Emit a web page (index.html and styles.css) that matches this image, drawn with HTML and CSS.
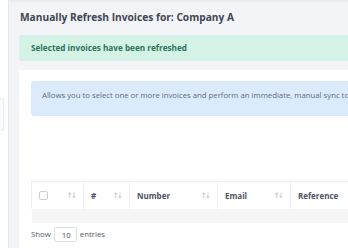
FILE: index.html
```html
<!DOCTYPE html>
<html lang="en">
<head>
    <meta charset="UTF-8">
    <title>Manually Refresh Invoices</title>
    <link rel="stylesheet" href="styles.css">
</head>
<body>
    <div class="layout">
        <!-- Left sidebar edge -->
        <aside class="sidebar">
            <div class="sidebarItem"></div>
        </aside>

        <main class="content">
            <h1 class="pageTitle">Manually Refresh Invoices for: Company A</h1>

            <div class="alertSuccess">Selected invoices have been refreshed</div>

            <div class="card">
                <div class="infoBox">Allows you to select one or more invoices and perform an immediate, manual sync to update them from the accounting system.</div>

                <div class="tableSpacer"></div>

                <table class="invoiceTable">
                    <thead>
                        <tr>
                            <th class="colCheck"><span class="thInner"><span class="checkbox"></span><span class="sortIcon">↑↓</span></span></th>
                            <th class="colHash"><span class="thInner"><span>#</span><span class="sortIcon">↑↓</span></span></th>
                            <th class="colNumber"><span class="thInner"><span>Number</span><span class="sortIcon">↑↓</span></span></th>
                            <th class="colEmail"><span class="thInner"><span>Email</span><span class="sortIcon">↑↓</span></span></th>
                            <th class="colRef"><span class="thInner"><span>Reference</span><span class="sortIcon">↑↓</span></span></th>
                        </tr>
                    </thead>
                    <tbody>
                        <tr class="emptyRow"><td colspan="5"></td></tr>
                    </tbody>
                </table>

                <div class="lengthControl">
                    Show <span class="lengthInput">10</span> entries
                </div>
            </div>
        </main>
    </div>
</body>
</html>
```

FILE: styles.css
```css
/* General body styling */
body {
    margin: 0;
    font-family: "Open Sans", "Noto Sans", sans-serif;
    background-color: #f3f4f7;
    overflow: hidden;
}

.layout {
    display: flex;
    height: 248px;
}

/* Thin piece of sidebar on the left */
.sidebar {
    width: 8px;
    flex-shrink: 0;
    background-color: #ffffff;
    border-right: 1px solid #e4e6eb;
    padding-top: 99px;
}

.sidebarItem {
    width: 3px;
    height: 29px;
    border: 1px solid #e6ecf4;
    border-left: none;
    background-color: #fbfcfe;
}

/* Main content column */
.content {
    width: 640px;
    flex-shrink: 0;
    padding-left: 10px;
    border-top: 2px solid #e9ebef;
}

.pageTitle {
    margin: 0;
    padding: 8px 0 0 1px;
    height: 17px;
    font-size: 10.2px;
    font-weight: 700;
    color: #3e4553;
}

.alertSuccess {
    margin-top: 8px;
    height: 26px;
    line-height: 26px;
    padding-left: 12px;
    background-color: #d5f2e6;
    color: #2a7457;
    font-size: 8.2px;
    font-weight: 700;
    border-radius: 3px;
}

/* White card */
.card {
    margin-top: 9px;
    background-color: #ffffff;
    padding: 11px 12px;
    height: 200px;
}

.infoBox {
    height: 35px;
    line-height: 28px;
    padding-left: 11px;
    background-color: #dcebfb;
    color: #5b6b80;
    font-size: 7.75px;
    border-radius: 3px;
    white-space: nowrap;
}

.tableSpacer {
    height: 65px;
}

/* Table styling */
.invoiceTable {
    border-collapse: collapse;
    font-size: 8px;
    color: #4b5466;
}

.invoiceTable th {
    height: 27px;
    padding: 0 6px 0 7px;
    border: 1px solid #eef0f3;
    border-bottom: none;
    text-align: left;
    font-weight: 700;
    box-sizing: border-box;
}

.thInner {
    display: flex;
    align-items: center;
    justify-content: space-between;
}

.sortIcon {
    color: #b9bec6;
    font-family: "DejaVu Sans", sans-serif;
    font-size: 7.5px;
    font-weight: 400;
    letter-spacing: -2px;
    padding-right: 2px;
}

.checkbox {
    width: 7px;
    height: 7px;
    border: 1px solid #c9ced6;
    border-radius: 2px;
}

.colCheck { width: 52px; }
.colHash { width: 46px; }
.colNumber { width: 88px; }
.colEmail { width: 73px; }
.colRef { width: 120px; }

.emptyRow td {
    height: 14px;
    padding: 0;
    background-color: #f6f6f7;
}

/* "Show 10 entries" control */
.lengthControl {
    display: flex;
    align-items: center;
    gap: 3px;
    margin-top: 4px;
    font-size: 7.8px;
    color: #555d6b;
}

.lengthInput {
    width: 23px;
    height: 15px;
    line-height: 15px;
    padding-left: 7px;
    box-sizing: border-box;
    border: 1px solid #dde1e6;
    border-radius: 2px;
    color: #3e4553;
}
```
